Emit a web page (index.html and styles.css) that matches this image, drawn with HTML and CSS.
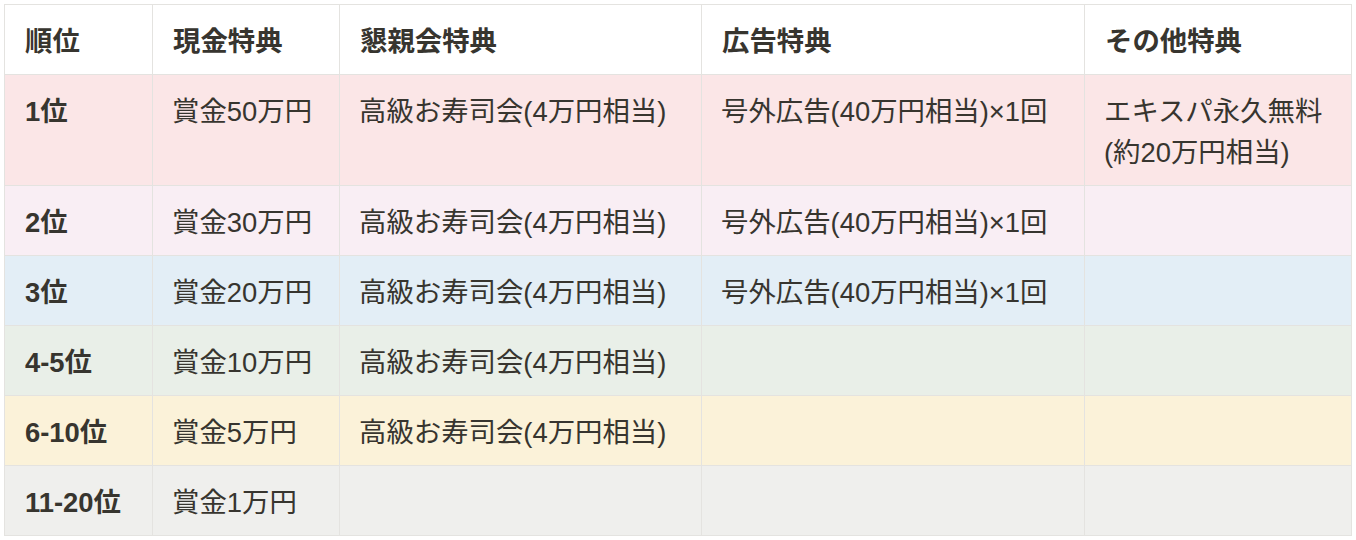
FILE: index.html
```html
<!DOCTYPE html>
<html lang="ja">
<head>
<meta charset="utf-8">
<link rel="stylesheet" href="styles.css">
</head>
<body>
<table class="prize-table">
  <colgroup>
    <col class="c1"><col class="c2"><col class="c3"><col class="c4"><col class="c5">
  </colgroup>
  <thead>
    <tr class="head">
      <th>順位</th><th>現金特典</th><th>懇親会特典</th><th>広告特典</th><th>その他特典</th>
    </tr>
  </thead>
  <tbody>
    <tr class="red">
      <th>1位</th><td>賞金50万円</td><td>高級お寿司会(4万円相当)</td><td>号外広告(40万円相当)×1回</td><td>エキスパ永久無料<br>(約20万円相当)</td>
    </tr>
    <tr class="pink">
      <th>2位</th><td>賞金30万円</td><td>高級お寿司会(4万円相当)</td><td>号外広告(40万円相当)×1回</td><td></td>
    </tr>
    <tr class="blue">
      <th>3位</th><td>賞金20万円</td><td>高級お寿司会(4万円相当)</td><td>号外広告(40万円相当)×1回</td><td></td>
    </tr>
    <tr class="green">
      <th>4-5位</th><td>賞金10万円</td><td>高級お寿司会(4万円相当)</td><td></td><td></td>
    </tr>
    <tr class="yellow">
      <th>6-10位</th><td>賞金5万円</td><td>高級お寿司会(4万円相当)</td><td></td><td></td>
    </tr>
    <tr class="gray">
      <th>11-20位</th><td>賞金1万円</td><td></td><td></td><td></td>
    </tr>
  </tbody>
</table>
</body>
</html>
```

FILE: styles.css
```css
html, body {
  margin: 0;
  padding: 0;
  background: #ffffff;
}
body {
  padding: 4px 0 0 4px;
  font-family: "Liberation Sans", "Noto Sans CJK JP", sans-serif;
  color: #37352f;
}
.prize-table {
  border-collapse: separate;
  border-spacing: 0;
  table-layout: fixed;
  width: 1347px;
  border-top: 1px solid #e4e3e0;
  border-left: 1px solid #e4e3e0;
  font-size: 27.4px;
  line-height: 41px;
}
.c1 { width: 148px; }
.c2 { width: 187px; }
.c3 { width: 362px; }
.c4 { width: 383px; }
.c5 { width: 267px; }
.prize-table th,
.prize-table td {
  padding: 16px 20px 12px 19px;
  border-right: 1px solid #e4e3e0;
  border-bottom: 1px solid #e4e3e0;
  text-align: left;
  vertical-align: top;
  white-space: nowrap;
}
.prize-table th {
  font-weight: 700;
  padding-left: 20px;
}
.prize-table td {
  font-weight: 400;
}
.head th { background: #ffffff; }
.red th, .red td { background: #fbe6e7; }
.pink th, .pink td { background: #f9eef4; }
.blue th, .blue td { background: #e3eef6; }
.green th, .green td { background: #e9efe8; }
.yellow th, .yellow td { background: #fbf2d9; }
.gray th, .gray td { background: #efefed; }
```
